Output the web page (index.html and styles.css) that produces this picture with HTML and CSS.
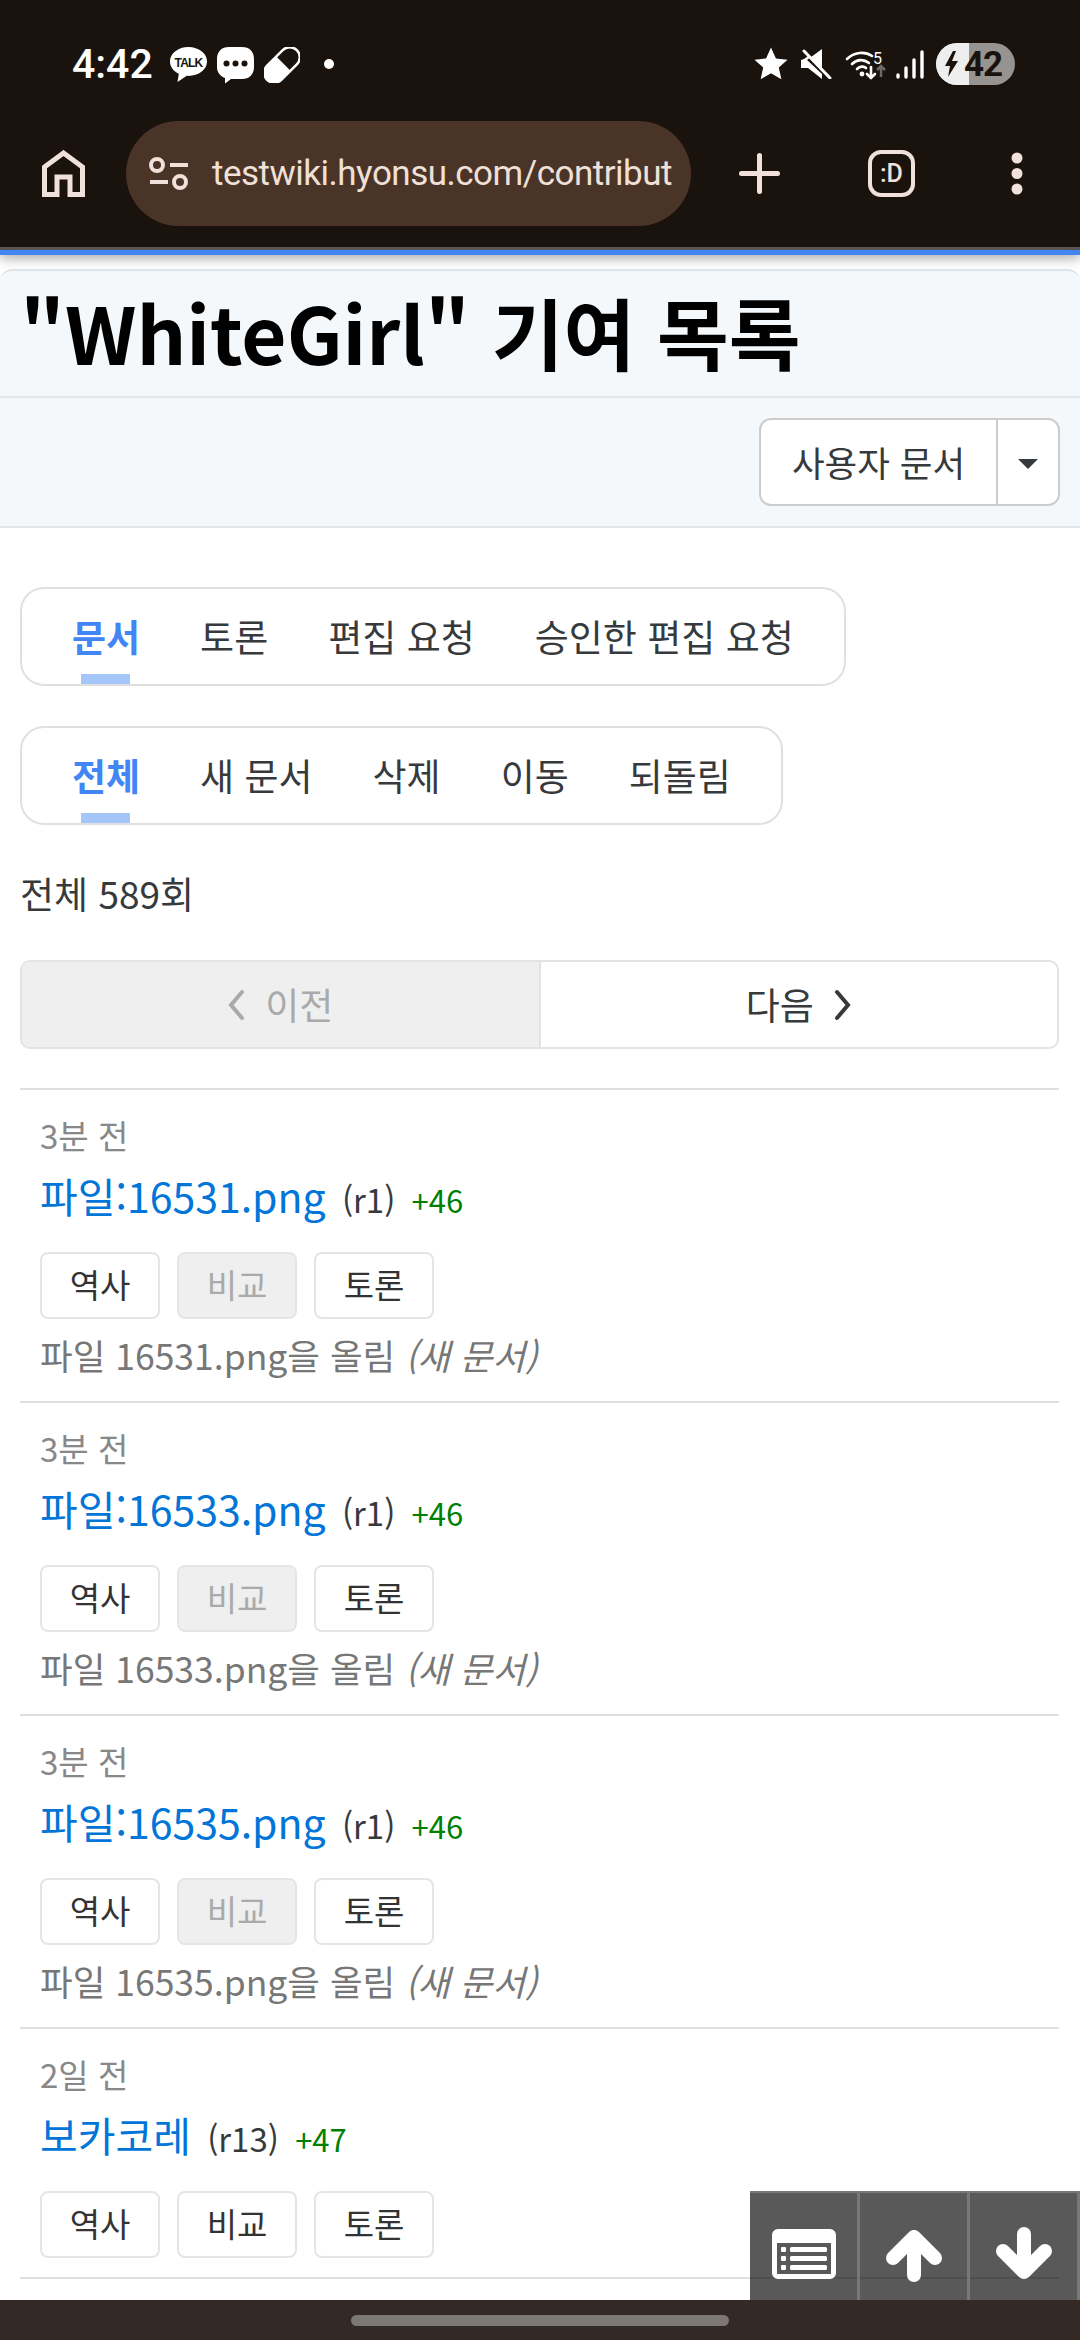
FILE: index.html
```html
<!DOCTYPE html>
<html lang="ko">
<head>
    <meta charset="utf-8">
    <title>"WhiteGirl" 기여 목록</title>
    <link rel="stylesheet" href="styles.css">
</head>
<body>
<div class="screen">
    <header class="chrome">
        <div class="status">
            <div class="status-left">
                <span class="clock">4:42</span>
                <svg class="ic-talk" viewBox="0 0 37 36"><path fill="#fff" d="M18.5 0C8.3 0 0 6.3 0 14.5c0 5.4 3.6 9.8 8.8 12.3L7.500 35l9.300-6.200c.6 0 1.100.1 1.700.1C28.700 28.900 37 22.600 37 14.500S28.700 0 18.500 0z"/><text x="18.500" y="19.500" text-anchor="middle" class="talk-text">TALK</text></svg>
                <svg class="ic-msg" viewBox="0 0 37 37"><path fill="#fff" d="M12 0h13c7.500 0 12 4.500 12 12v8c0 7.500-4.500 12-12 12H14l-6 4.500V31C3 29 0 25.500 0 20v-8C0 4.500 4.500 0 12 0z"/><circle cx="9.500" cy="16.500" r="3" fill="#1a120d"/><circle cx="18.500" cy="16.500" r="3" fill="#1a120d"/><circle cx="27.500" cy="16.500" r="3" fill="#1a120d"/></svg>
                <svg class="ic-pill" viewBox="0 0 36 36"><g transform="rotate(-45 18 18)"><rect x="-3" y="8" width="42" height="20" rx="10" fill="none" stroke="#fff" stroke-width="2.500"/><path fill="#fff" d="M20 8H7a10 10 0 0 0 0 20h13z"/></g></svg>
                <span class="notif-dot"></span>
            </div>
            <div class="status-right">
                <svg class="ic-star" viewBox="0 0 24 24"><path fill="#fff" d="M12 1l3.300 7.300 7.700.8-5.800 5.300 1.700 7.800-6.900-4-6.900 4 1.700-7.800L1 9.100l7.700-.8z"/></svg>
                <svg class="ic-mute" viewBox="0 0 31 30"><path fill="#fff" d="M0 11h6L21 0v20L7 7 3 10zM0 11v8h7l14 11v-5L5 10z"/><path stroke="#fff" stroke-width="3" stroke-linecap="round" d="M3 2l26 27"/></svg>
                <svg class="ic-wifi" viewBox="0 0 42 29"><g fill="none" stroke="#fff" stroke-width="2.600" stroke-linecap="round"><path d="M1 9c7-7 18-8 25-3"/><path d="M6 14c5-5 12-5 17-1"/><path d="M11 19c3-3 7-3 9-1"/><path d="M25 17v11M21 24l4 4 4-4"/></g><circle cx="16" cy="24" r="2.400" fill="#fff"/><path stroke="#6e6a68" stroke-width="2.500" fill="none" d="M35 27V17M31 20l4-4 4 4"/><text x="27" y="14" class="wifi-text">5</text></svg>
                <svg class="ic-signal" viewBox="0 0 30 29"><g stroke="#fff" stroke-width="3.400" stroke-linecap="round"><path d="M3 27v-2"/><path d="M11 27v-9"/><path d="M19 27V10"/><path d="M27 27V2"/></g></svg>
                <div class="battery">
                    <span class="battery-fill"></span>
                    <svg class="ic-bolt" viewBox="0 0 16 26"><path fill="#1a120d" d="M9 0L1 15h5l-2 11 10-16H8l4-10z"/></svg>
                    <span class="battery-num">42</span>
                </div>
            </div>
        </div>
        <div class="toolbar">
            <svg class="ic-home" viewBox="0 0 43 47"><path fill="none" stroke="#f0e1da" stroke-width="5" d="M2.500 44.500V17L21.500 3l19 14v27.500H28V27H15v17.500z"/></svg>
            <div class="omnibox">
                <svg class="ic-tune" viewBox="0 0 39 33"><g fill="none" stroke="#f0e1da" stroke-width="4"><circle cx="8" cy="8" r="6"/><circle cx="31" cy="25" r="6"/><path d="M21 8h18M1 25h18"/></g></svg>
                <span class="url">testwiki.hyonsu.com/contribut</span>
            </div>
            <svg class="ic-plus" viewBox="0 0 41 41"><path stroke="#f0e1da" stroke-width="5" stroke-linecap="round" d="M20.500 2.500v36M2.500 20.500h36"/></svg>
            <div class="tab-count">:D</div>
            <svg class="ic-more" viewBox="0 0 12 43"><circle cx="6" cy="6" r="5.500" fill="#f0e1da"/><circle cx="6" cy="21.500" r="5.500" fill="#f0e1da"/><circle cx="6" cy="37" r="5.500" fill="#f0e1da"/></svg>
        </div>
        <div class="load-bar"></div>
    </header>

    <main class="page">
        <section class="card">
            <h1 class="title">"WhiteGirl" 기여 목록</h1>
            <div class="tools">
                <div class="split-btn">
                    <span class="split-main">사용자 문서</span>
                    <span class="split-caret"><i class="caret"></i></span>
                </div>
            </div>
        </section>

        <div class="body">
            <nav class="tabs">
                <a class="tab active">문서</a>
                <a class="tab">토론</a>
                <a class="tab">편집 요청</a>
                <a class="tab">승인한 편집 요청</a>
            </nav>
            <nav class="tabs">
                <a class="tab active">전체</a>
                <a class="tab">새 문서</a>
                <a class="tab">삭제</a>
                <a class="tab">이동</a>
                <a class="tab">되돌림</a>
            </nav>

            <p class="count">전체 589회</p>

            <div class="pager">
                <a class="pager-btn disabled"><svg class="chev" viewBox="0 0 18 32"><path d="M15 3L4 16l11 13"/></svg> 이전</a>
                <a class="pager-btn">다음 <svg class="chev" viewBox="0 0 18 32"><path d="M3 3l11 13L3 29"/></svg></a>
            </div>

            <ul class="list">
                <li class="item">
                    <div class="time">3분 전</div>
                    <div class="head"><a class="doc">파일:16531.png</a> <span class="rev">(r1)</span> <span class="diff">+46</span></div>
                    <div class="actions"><a class="btn">역사</a><a class="btn disabled">비교</a><a class="btn">토론</a></div>
                    <div class="desc">파일 16531.png을 올림 <i>(새 문서)</i></div>
                </li>
                <li class="item">
                    <div class="time">3분 전</div>
                    <div class="head"><a class="doc">파일:16533.png</a> <span class="rev">(r1)</span> <span class="diff">+46</span></div>
                    <div class="actions"><a class="btn">역사</a><a class="btn disabled">비교</a><a class="btn">토론</a></div>
                    <div class="desc">파일 16533.png을 올림 <i>(새 문서)</i></div>
                </li>
                <li class="item">
                    <div class="time">3분 전</div>
                    <div class="head"><a class="doc">파일:16535.png</a> <span class="rev">(r1)</span> <span class="diff">+46</span></div>
                    <div class="actions"><a class="btn">역사</a><a class="btn disabled">비교</a><a class="btn">토론</a></div>
                    <div class="desc">파일 16535.png을 올림 <i>(새 문서)</i></div>
                </li>
                <li class="item short">
                    <div class="time">2일 전</div>
                    <div class="head"><a class="doc">보카코레</a> <span class="rev">(r13)</span> <span class="diff">+47</span></div>
                    <div class="actions"><a class="btn">역사</a><a class="btn">비교</a><a class="btn">토론</a></div>
                </li>
            </ul>
        </div>

        <div class="float-nav">
            <a class="float-btn"><svg class="ic-list" viewBox="0 0 64 50"><path fill="#fff" fill-rule="evenodd" d="M6 0h52a6 6 0 0 1 6 6v38a6 6 0 0 1-6 6H6a6 6 0 0 1-6-6V6a6 6 0 0 1 6-6zM5 14v31h54V14z"/><g fill="#fff"><rect x="9" y="18" width="5" height="5" rx="1"/><rect x="9" y="27" width="5" height="5" rx="1"/><rect x="9" y="36" width="5" height="5" rx="1"/><rect x="18" y="18" width="37" height="5" rx="1.500"/><rect x="18" y="27" width="37" height="5" rx="1.500"/><rect x="18" y="36" width="37" height="5" rx="1.500"/></g></svg></a>
            <a class="float-btn"><svg class="ic-arrow" viewBox="0 0 56 53"><path fill="none" stroke="#fff" stroke-width="14" stroke-linecap="round" stroke-linejoin="round" d="M28 46V8M7 29L28 8l21 21"/></svg></a>
            <a class="float-btn"><svg class="ic-arrow down" viewBox="0 0 56 53"><path fill="none" stroke="#fff" stroke-width="14" stroke-linecap="round" stroke-linejoin="round" d="M28 7v38M7 24l21 21 21-21"/></svg></a>
        </div>
    </main>

    <footer class="navbar"><span class="handle"></span></footer>
</div>
</body>
</html>
```

FILE: styles.css
```css
* {
    box-sizing: border-box;
}
html, body {
    margin: 0;
    padding: 0;
    background: #fff;
}
body {
    font-family: "Noto Sans CJK KR", "Noto Sans", sans-serif;
    font-size: 37px;
    color: #373a3c;
}
.screen {
    width: 1080px;
    height: 2340px;
    display: flex;
    flex-direction: column;
    overflow: hidden;
}

/* browser chrome */
.chrome {
    height: 255px;
    flex: none;
    background: #1a120d;
    position: relative;
    z-index: 2;
    box-shadow: 0 3px 12px rgba(0, 0, 0, 0.35);
}
.status {
    height: 121px;
    display: flex;
    justify-content: space-between;
    align-items: flex-start;
    padding: 43px 65px 0 72px;
}
.status-left, .status-right {
    display: flex;
    align-items: center;
    height: 42px;
}
.clock {
    font-family: Roboto, sans-serif;
    font-weight: 500;
    font-size: 41px;
    color: #fff;
    width: 98px;
    white-space: nowrap;
}
.ic-talk {
    width: 37px;
    height: 36px;
    margin-right: 10px;
    margin-top: 2px;
}
.talk-text {
    font-family: "Liberation Sans", sans-serif;
    font-size: 12px;
    font-weight: 700;
    letter-spacing: -0.8px;
    fill: #1a120d;
}
.ic-msg {
    width: 37px;
    height: 37px;
    margin-right: 10px;
    margin-top: 2px;
}
.ic-pill {
    width: 36px;
    height: 36px;
    margin-top: 2px;
}
.notif-dot {
    width: 10px;
    height: 10px;
    border-radius: 50%;
    background: #fff;
    margin-left: 24px;
}
.ic-star {
    width: 36px;
    height: 36px;
    margin-right: 12px;
}
.ic-mute {
    width: 31px;
    height: 30px;
    margin-right: 14px;
}
.ic-wifi {
    width: 42px;
    height: 29px;
    margin-right: 7px;
    overflow: visible;
}
.wifi-text {
    font-family: Roboto, sans-serif;
    font-size: 16px;
    fill: #fff;
}
.ic-signal {
    width: 30px;
    height: 29px;
    margin-right: 11px;
}
.battery {
    width: 79px;
    height: 42px;
    border-radius: 21px;
    background: #979390;
    overflow: hidden;
    display: flex;
    align-items: center;
    position: relative;
}
.battery-fill {
    position: absolute;
    left: 0;
    top: 0;
    bottom: 0;
    width: 33px;
    background: #eeeeee;
}
.ic-bolt {
    width: 16px;
    height: 26px;
    margin-left: 8px;
    position: relative;
}
.battery-num {
    font-family: Roboto, sans-serif;
    font-weight: 700;
    font-size: 35px;
    color: #1a120d;
    margin-left: 4px;
    letter-spacing: -1px;
    position: relative;
}
.toolbar {
    height: 126px;
    display: flex;
    align-items: flex-start;
}
.ic-home {
    width: 43px;
    height: 47px;
    margin: 29px 41px 0 42px;
    flex: none;
}
.omnibox {
    width: 565px;
    height: 105px;
    border-radius: 53px;
    background: #4a3327;
    display: flex;
    align-items: center;
    padding: 0 21px 0 23px;
    flex: none;
}
.ic-tune {
    width: 39px;
    height: 33px;
    flex: none;
    margin-right: 24px;
}
.url {
    font-family: Roboto, sans-serif;
    font-size: 35px;
    letter-spacing: -0.5px;
    color: #efe0d8;
    white-space: nowrap;
}
.ic-plus {
    width: 41px;
    height: 41px;
    margin: 32px 88px 0 48px;
    flex: none;
}
.tab-count {
    width: 47px;
    height: 47px;
    margin-top: 29px;
    flex: none;
    border: 4px solid #f0e1da;
    border-radius: 13px;
    display: flex;
    align-items: center;
    justify-content: center;
    font-family: Roboto, sans-serif;
    font-weight: 500;
    font-size: 25px;
    color: #f0e1da;
}
.ic-more {
    width: 12px;
    height: 43px;
    margin: 31px 0 0 96px;
    flex: none;
}
.load-bar {
    height: 8px;
    background: #4285f4;
    border-top: 3px solid #5a5552;
}

/* page */
.page {
    flex: 1;
    position: relative;
    overflow: hidden;
    padding-top: 14px;
}
.card {
    background: #f5f8fb;
    border-top: 2px solid #dfe5ea;
    border-bottom: 2px solid #e2e7ec;
    border-radius: 12px 12px 0 0;
}
.title {
    margin: 0;
    height: 127px;
    padding-left: 20px;
    font-size: 78px;
    font-weight: 700;
    line-height: 120px;
    color: #000;
    border-bottom: 2px solid #e2e7ec;
    white-space: nowrap;
}
.tools {
    height: 128px;
    display: flex;
    justify-content: flex-end;
    padding: 20px 20px 0 0;
}
.split-btn {
    width: 301px;
    height: 88px;
    display: flex;
    background: #fff;
    border: 2px solid #ccc;
    border-radius: 12px;
}
.split-main {
    width: 237px;
    text-align: center;
    line-height: 84px;
    font-size: 35.500px;
    white-space: nowrap;
    border-right: 2px solid #ccc;
}
.split-caret {
    flex: 1;
    display: flex;
    align-items: center;
    justify-content: center;
    padding-top: 4px;
}
.caret {
    width: 0;
    height: 0;
    border-left: 10px solid transparent;
    border-right: 10px solid transparent;
    border-top: 10px solid #373a3c;
}
.body {
    padding: 59px 21px 0 20px;
}
.tabs {
    display: flex;
    width: fit-content;
    height: 99px;
    margin-bottom: 40px;
    padding: 0 20px;
    background: #fff;
    border: 2px solid #e0e0e0;
    border-radius: 24px;
}
.tab {
    position: relative;
    padding: 0 30px;
    font-size: 37px;
    line-height: 94px;
    white-space: nowrap;
}
.tab.active {
    color: #4285f4;
    font-weight: 700;
}
.tab.active::after {
    content: "";
    position: absolute;
    left: 39px;
    bottom: 0;
    width: 49px;
    height: 10px;
    background: #a5c6f9;
}
.count {
    margin: 0;
    height: 95px;
    line-height: 56px;
    white-space: nowrap;
}
.pager {
    display: flex;
    height: 89px;
    background: #fff;
    border: 2px solid #e3e3e3;
    border-radius: 10px;
    overflow: hidden;
    margin-bottom: 39px;
}
.pager-btn {
    flex: 1;
    display: flex;
    align-items: center;
    justify-content: center;
    gap: 20px;
    font-size: 37px;
    line-height: 1;
}
.pager-btn.disabled {
    background: #efefef;
    color: #aaa;
    border-right: 2px solid #e3e3e3;
}
.chev {
    width: 18px;
    height: 32px;
    fill: none;
    stroke: currentColor;
    stroke-width: 4;
    stroke-linecap: round;
}
.list {
    margin: 0;
    padding: 0;
    list-style: none;
    border-top: 2px solid #e0e0e0;
}
.item {
    height: 313px;
    padding: 23px 20px 0 20px;
    border-bottom: 2px solid #e0e0e0;
}
.item.short {
    height: 250px;
}
.time {
    height: 45px;
    line-height: 44px;
    font-size: 33px;
    color: #888;
    white-space: nowrap;
}
.head {
    height: 69px;
    line-height: 57px;
    margin-top: 9px;
    white-space: nowrap;
    font-size: 33px;
}
.doc {
    color: #0275d8;
    font-size: 41px;
    margin-right: 7px;
}
.rev {
    font-size: 33px;
    margin-right: 7px;
}
.diff {
    color: #008000;
    font-size: 31px;
}
.actions {
    display: flex;
    gap: 17px;
    margin-top: 16px;
}
.btn {
    width: 120px;
    height: 67px;
    line-height: 61px;
    text-align: center;
    font-size: 33px;
    color: #333;
    background: #fff;
    border: 2px solid #e5e5e5;
    border-radius: 8px;
}
.btn.disabled {
    background: #efefef;
    color: #aaa;
}
.desc {
    margin-top: 12px;
    font-size: 35.500px;
    line-height: 48px;
    color: #777;
    white-space: nowrap;
}

/* floating buttons */
.float-nav {
    position: absolute;
    right: 0;
    bottom: 0;
    display: flex;
    height: 109px;
    background: rgba(0, 0, 0, 0.65);
    border-top: 2px solid #777;
}
.float-btn {
    width: 110px;
    height: 107px;
    display: flex;
    justify-content: center;
    padding-top: 36px;
    border-right: 3px solid #777;
}
.ic-list {
    width: 64px;
    height: 50px;
}
.ic-arrow {
    width: 56px;
    height: 53px;
}
.ic-arrow.down {
    margin-top: -2px;
}

.navbar {
    height: 40px;
    flex: none;
    background: #332a25;
    display: flex;
    justify-content: center;
    align-items: center;
}
.handle {
    width: 378px;
    height: 11px;
    margin-top: 1px;
    border-radius: 6px;
    background: #7e7874;
}
```
